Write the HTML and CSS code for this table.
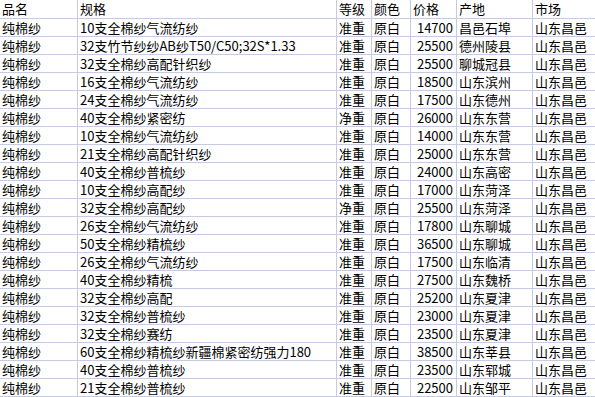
FILE: index.html
```html
<!DOCTYPE html>
<html lang="zh">
<head>
<meta charset="utf-8">
<link rel="stylesheet" href="styles.css">
</head>
<body>
<table class="sheet">
<colgroup>
<col class="c-name"><col class="c-spec"><col class="c-grade"><col class="c-color"><col class="c-price"><col class="c-origin"><col class="c-market">
</colgroup>
<thead>
<tr class="head"><td>品名</td><td>规格</td><td>等级</td><td>颜色</td><td>价格</td><td>产地</td><td>市场</td></tr>
</thead>
<tbody>
<tr><td>纯棉纱</td><td>10支全棉纱气流纺纱</td><td>准重</td><td>原白</td><td class="num">14700</td><td>昌邑石埠</td><td>山东昌邑</td></tr>
<tr><td>纯棉纱</td><td>32支竹节纱纱AB纱T50/C50;32S*1.33</td><td>准重</td><td>原白</td><td class="num">25500</td><td>德州陵县</td><td>山东昌邑</td></tr>
<tr><td>纯棉纱</td><td>32支全棉纱高配针织纱</td><td>准重</td><td>原白</td><td class="num">25500</td><td>聊城冠县</td><td>山东昌邑</td></tr>
<tr><td>纯棉纱</td><td>16支全棉纱气流纺纱</td><td>准重</td><td>原白</td><td class="num">18500</td><td>山东滨州</td><td>山东昌邑</td></tr>
<tr><td>纯棉纱</td><td>24支全棉纱气流纺纱</td><td>准重</td><td>原白</td><td class="num">17500</td><td>山东德州</td><td>山东昌邑</td></tr>
<tr><td>纯棉纱</td><td>40支全棉纱紧密纺</td><td>净重</td><td>原白</td><td class="num">26000</td><td>山东东营</td><td>山东昌邑</td></tr>
<tr><td>纯棉纱</td><td>10支全棉纱气流纺纱</td><td>准重</td><td>原白</td><td class="num">14000</td><td>山东东营</td><td>山东昌邑</td></tr>
<tr><td>纯棉纱</td><td>21支全棉纱高配针织纱</td><td>准重</td><td>原白</td><td class="num">25000</td><td>山东东营</td><td>山东昌邑</td></tr>
<tr><td>纯棉纱</td><td>40支全棉纱普梳纱</td><td>准重</td><td>原白</td><td class="num">24000</td><td>山东高密</td><td>山东昌邑</td></tr>
<tr><td>纯棉纱</td><td>10支全棉纱高配纱</td><td>准重</td><td>原白</td><td class="num">17000</td><td>山东菏泽</td><td>山东昌邑</td></tr>
<tr><td>纯棉纱</td><td>32支全棉纱高配纱</td><td>净重</td><td>原白</td><td class="num">25500</td><td>山东菏泽</td><td>山东昌邑</td></tr>
<tr><td>纯棉纱</td><td>26支全棉纱气流纺纱</td><td>准重</td><td>原白</td><td class="num">17800</td><td>山东聊城</td><td>山东昌邑</td></tr>
<tr><td>纯棉纱</td><td>50支全棉纱精梳纱</td><td>准重</td><td>原白</td><td class="num">36500</td><td>山东聊城</td><td>山东昌邑</td></tr>
<tr><td>纯棉纱</td><td>26支全棉纱气流纺纱</td><td>准重</td><td>原白</td><td class="num">17500</td><td>山东临清</td><td>山东昌邑</td></tr>
<tr><td>纯棉纱</td><td>40支全棉纱精梳</td><td>准重</td><td>原白</td><td class="num">27500</td><td>山东魏桥</td><td>山东昌邑</td></tr>
<tr><td>纯棉纱</td><td>32支全棉纱高配</td><td>准重</td><td>原白</td><td class="num">25200</td><td>山东夏津</td><td>山东昌邑</td></tr>
<tr><td>纯棉纱</td><td>32支全棉纱普梳纱</td><td>准重</td><td>原白</td><td class="num">23000</td><td>山东夏津</td><td>山东昌邑</td></tr>
<tr><td>纯棉纱</td><td>32支全棉纱赛纺</td><td>准重</td><td>原白</td><td class="num">23500</td><td>山东夏津</td><td>山东昌邑</td></tr>
<tr><td>纯棉纱</td><td>60支全棉纱精梳纱新疆棉紧密纺强力180</td><td>准重</td><td>原白</td><td class="num">38500</td><td>山东莘县</td><td>山东昌邑</td></tr>
<tr><td>纯棉纱</td><td>40支全棉纱普梳纱</td><td>准重</td><td>原白</td><td class="num">23500</td><td>山东郓城</td><td>山东昌邑</td></tr>
<tr><td>纯棉纱</td><td>21支全棉纱普梳纱</td><td>准重</td><td>原白</td><td class="num">22500</td><td>山东邹平</td><td>山东昌邑</td></tr>
</tbody>
</table>
</body>
</html>
```
FILE: styles.css
```css
html, body {
  margin: 0;
  padding: 0;
  background: #ffffff;
  overflow: hidden;
}

.sheet {
  border-collapse: separate;
  border-spacing: 0;
  table-layout: fixed;
  width: 596px;
  font-family: "Noto Sans CJK SC", "Liberation Sans", sans-serif;
  font-size: 13px;
  color: #000000;
}

.c-name { width: 78px; }
.c-spec { width: 259px; }
.c-grade { width: 35px; }
.c-color { width: 39px; }
.c-price { width: 46px; }
.c-origin { width: 76px; }
.c-market { width: 63px; }

.sheet td {
  height: 17px;
  line-height: 17px;
  padding: 0 0 0 2px;
  border-right: 1px solid #c6cae2;
  border-bottom: 1px solid #c6cae2;
  white-space: nowrap;
  overflow: hidden;
  vertical-align: middle;
}

.sheet .head td {
  height: 18px;
  line-height: 18px;
}

.sheet td.num {
  text-align: right;
  padding: 0 3px 0 0;
}
```
